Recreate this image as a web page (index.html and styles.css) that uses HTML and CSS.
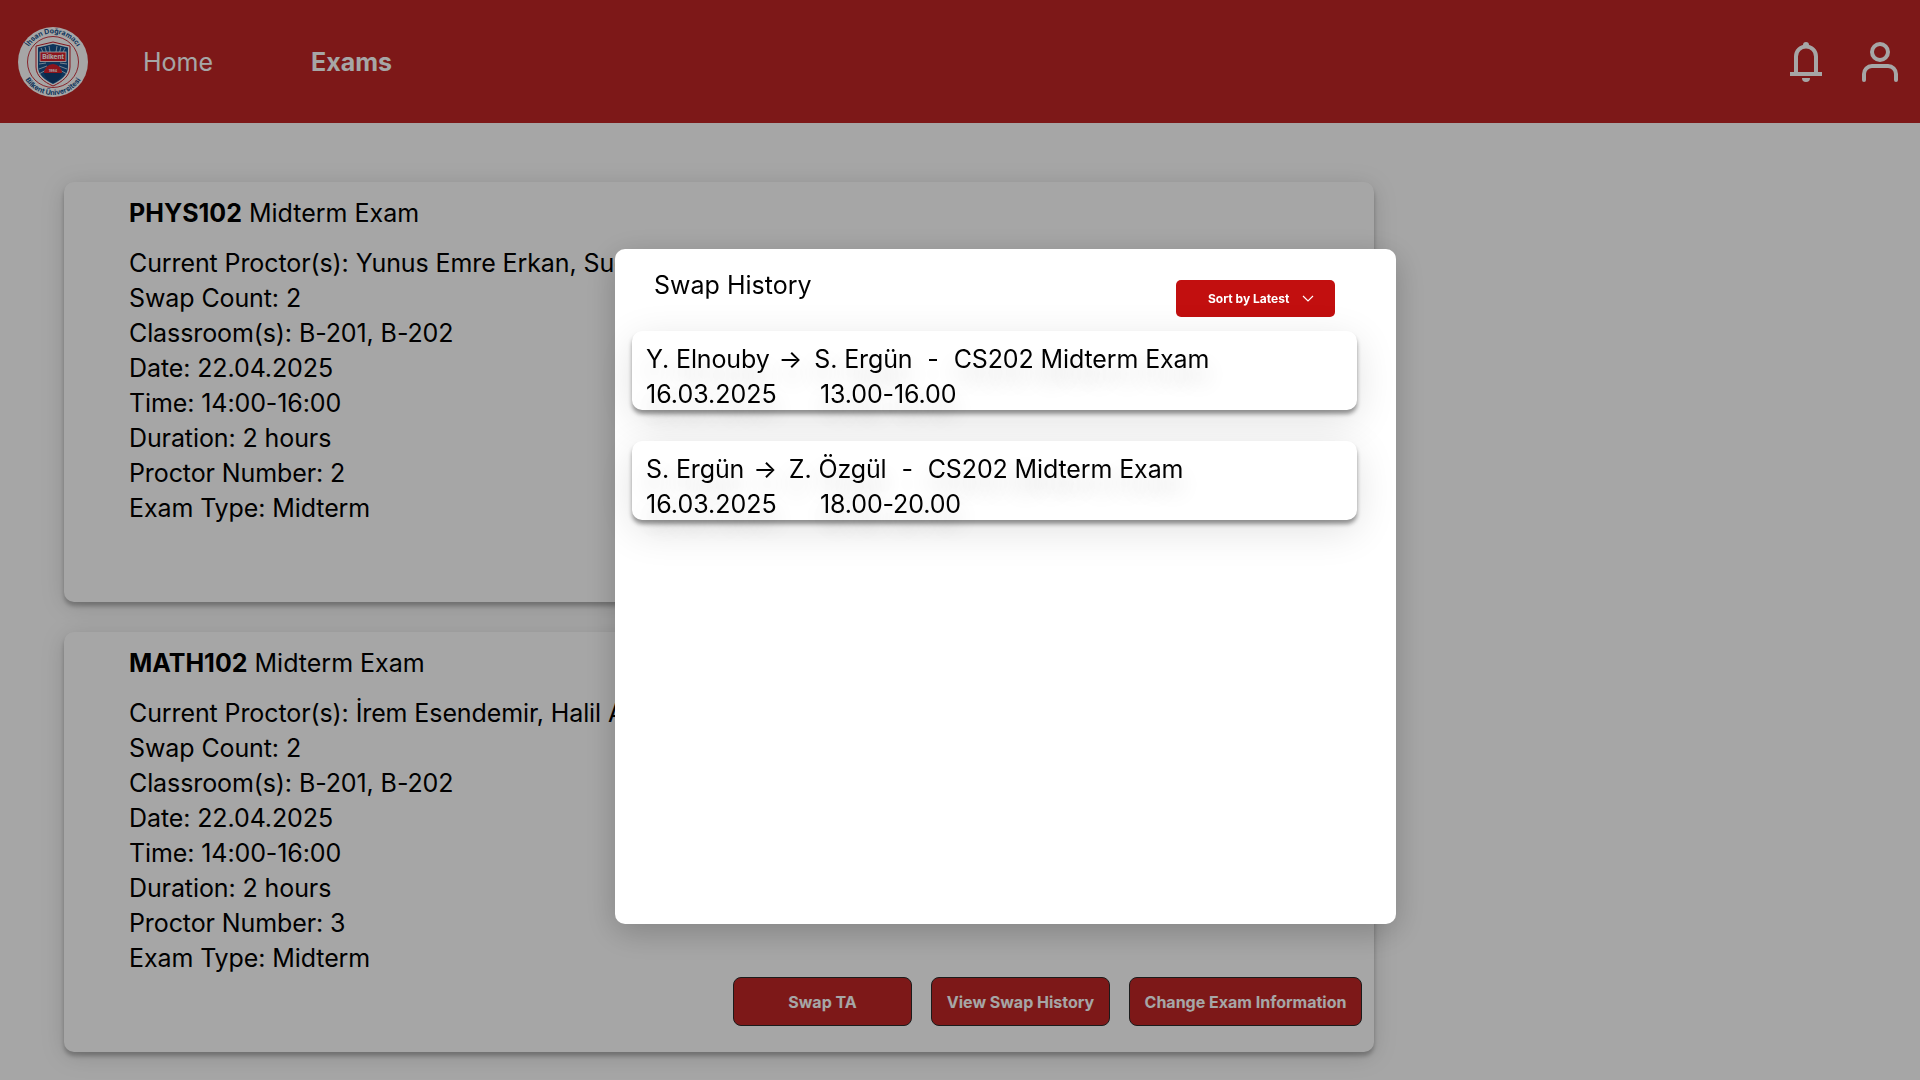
FILE: index.html
```html
<!DOCTYPE html>
<html lang="en">

<head>
    <meta charset="UTF-8">
    <meta name="viewport" content="width=device-width, initial-scale=1.0">
    <title>Exams</title>
    <link rel="stylesheet" href="styles.css">
</head>

<body>
    <header class="topbar">
        <svg class="logo" viewBox="0 0 70 70" role="img" aria-label="Bilkent University seal">
            <defs>
                <path id="arc-top" d="M6.500 35a28.500 28.500 0 0 1 57 0"/>
                <path id="arc-bottom" d="M2 35a33 33 0 0 0 66 0"/>
            </defs>
            <circle cx="35" cy="35" r="35" fill="#fff"/>
            <circle cx="35" cy="35" r="25.500" fill="none" stroke="#c8202c" stroke-width="0.9"/>
            <text class="seal-text"><textPath href="#arc-top" startOffset="50%" text-anchor="middle">İhsan Doğramacı</textPath></text>
            <text class="seal-text"><textPath href="#arc-bottom" startOffset="50%" text-anchor="middle">Bilkent Üniversitesi</textPath></text>
            <path d="M35 15l17 4v21c0 9-8 15-17 19-9-4-17-10-17-19V19z" fill="#fff" stroke="#c8202c" stroke-width="1"/>
            <path d="M35 17l15 3.500V40c0 8-7 13-15 17-8-4-15-9-15-17V20.500z" fill="#14508c"/>
            <path d="M23 21l5 10M27 20l3 11M31 19l2 12M39 19l-2 12M43 20l-3 11M47 21l-5 10M21 37l7-1M21 42l8-3M21 47l9-5M49 37l-7-1M49 42l-8-3M49 47l-9-5" stroke="#dfe6ee" stroke-width="0.8"/>
            <rect x="22" y="25" width="26" height="9.500" fill="#d8202c" stroke="#fff" stroke-width="0.8"/>
            <text class="seal-name" x="35" y="32" text-anchor="middle">Bilkent</text>
            <path d="M26 46a9 9 0 0 1 18 0z" fill="#d8202c"/>
            <path d="M26 46h18c-1 5-5 8-9 10-4-2-8-5-9-10z" fill="#123f73"/>
            <text class="seal-year" x="35" y="44.600" text-anchor="middle">1984</text>
        </svg>
        <nav class="nav">
            <a class="nav-link" href="#">Home</a>
            <a class="nav-link active" href="#">Exams</a>
        </nav>
        <div class="topbar-icons">
            <svg class="bell" viewBox="0 0 32 40" fill="none" stroke="#fff" stroke-width="4">
                <path d="M6 32V14.500a10 10 0 0 1 20 0V32"/>
                <path d="M0 32h32" stroke-width="4"/>
                <circle cx="16" cy="3" r="3" fill="#fff" stroke="none"/>
                <path d="M12 36h8a4 4 0 0 1-8 0z" fill="#fff" stroke="none"/>
            </svg>
            <svg class="person" viewBox="0 0 36 40" fill="none" stroke="#fff" stroke-width="4">
                <circle cx="18" cy="10" r="8"/>
                <path d="M2 38v-6a8 8 0 0 1 8-8h16a8 8 0 0 1 8 8v6" stroke-linecap="round"/>
            </svg>
        </div>
    </header>

    <main class="exam-list">
        <section class="exam-card">
            <h3 class="exam-title"><b>PHYS102</b> Midterm Exam</h3>
            <p class="exam-info">Current Proctor(s): Yunus Emre Erkan, Sude Ergün<br>Swap Count: 2<br>Classroom(s): B-201, B-202<br>Date: 22.04.2025<br>Time: 14:00-16:00<br>Duration: 2 hours<br>Proctor Number: 2<br>Exam Type: Midterm</p>
            <div class="exam-actions">
                <button class="action-btn">Swap TA</button>
                <button class="action-btn">View Swap History</button>
                <button class="action-btn wide">Change Exam Information</button>
            </div>
        </section>
        <section class="exam-card">
            <h3 class="exam-title"><b>MATH102</b> Midterm Exam</h3>
            <p class="exam-info">Current Proctor(s): İrem Esendemir, Halil Arda Özgül<br>Swap Count: 2<br>Classroom(s): B-201, B-202<br>Date: 22.04.2025<br>Time: 14:00-16:00<br>Duration: 2 hours<br>Proctor Number: 3<br>Exam Type: Midterm</p>
            <div class="exam-actions">
                <button class="action-btn">Swap TA</button>
                <button class="action-btn">View Swap History</button>
                <button class="action-btn wide">Change Exam Information</button>
            </div>
        </section>
    </main>

    <div class="overlay"></div>

    <div class="modal">
        <div class="modal-head">
            <h2 class="modal-title">Swap History</h2>
            <button class="sort-btn">Sort by Latest
                <svg class="chevron" viewBox="0 0 12 7" fill="none" stroke="#fff" stroke-width="1.200"><path d="M1 1l5 5 5-5"/></svg>
            </button>
        </div>
        <div class="swap-list">
            <div class="swap-item">
                <div class="swap-line">Y. Elnouby <span class="arrow">→</span> S. Ergün <span class="dash">-</span> CS202 Midterm Exam</div>
                <div class="swap-line"><span class="swap-date">16.03.2025</span>13.00-16.00</div>
            </div>
            <div class="swap-item">
                <div class="swap-line">S. Ergün <span class="arrow">→</span> Z. Özgül <span class="dash">-</span> CS202 Midterm Exam</div>
                <div class="swap-line"><span class="swap-date">16.03.2025</span>18.00-20.00</div>
            </div>
        </div>
    </div>
</body>

</html>
```

FILE: styles.css
```css
* {
    box-sizing: border-box;
}

html, body {
    height: 100%;
}

body {
    margin: 0;
    background: #fff;
    color: #000;
    font-family: Inter, "Liberation Sans", sans-serif;
    overflow: hidden;
}

.topbar {
    height: 123px;
    padding: 0 22px 0 18px;
    background: #c02626;
    display: flex;
    align-items: center;
}

.logo {
    width: 70px;
    height: 70px;
    flex-shrink: 0;
}

.seal-text {
    font-size: 7px;
    font-weight: 700;
    fill: #14508c;
}

.seal-name {
    font-size: 6.500px;
    font-weight: 700;
    fill: #fff;
}

.seal-year {
    font-size: 3.500px;
    font-weight: 700;
    fill: #fff;
}

.nav {
    margin-left: 55px;
    display: flex;
    gap: 98px;
}

.nav-link {
    color: #fff;
    font-size: 25px;
    text-decoration: none;
}

.nav-link.active {
    font-weight: 700;
}

.topbar-icons {
    margin-left: auto;
    display: flex;
    align-items: center;
    gap: 40px;
}

.bell {
    width: 32px;
    height: 40px;
}

.person {
    width: 36px;
    height: 40px;
}

.exam-list {
    width: 1374px;
    padding: 59px 0 0 64px;
    display: flex;
    flex-direction: column;
    gap: 30px;
}

.exam-card {
    height: 420px;
    padding: 12px 12px 26px 65px;
    border-radius: 10px;
    background: #fff;
    box-shadow: 0 4px 4px rgba(0, 0, 0, 0.25), 0 4px 24px rgba(0, 0, 0, 0.15);
    display: flex;
    flex-direction: column;
}

.exam-title {
    margin: 0 0 14px;
    font-size: 25px;
    font-weight: 400;
    line-height: 38px;
}

.exam-info {
    margin: 0;
    font-size: 25px;
    line-height: 35px;
    letter-spacing: -0.1px;
}

.exam-actions {
    margin-top: auto;
    display: flex;
    justify-content: flex-end;
    gap: 19px;
}

.action-btn {
    width: 179px;
    height: 49px;
    padding: 0;
    border: 1px solid #2a2a2a;
    border-radius: 8px;
    background: #c02626;
    color: #fff;
    font-family: inherit;
    font-size: 16px;
    font-weight: 700;
}

.action-btn.wide {
    width: 233px;
}

.overlay {
    position: fixed;
    inset: 0;
    background: rgba(0, 0, 0, 0.35);
}

.modal {
    position: fixed;
    left: 615px;
    top: 249px;
    width: 781px;
    height: 675px;
    padding: 16px 39px 0 17px;
    border-radius: 10px;
    background: #fff;
    box-shadow: 0 8px 32px rgba(0, 0, 0, 0.22);
}

.modal-head {
    height: 66px;
    display: flex;
    justify-content: space-between;
    align-items: flex-start;
}

.modal-title {
    margin: 0 0 0 22px;
    font-size: 25px;
    font-weight: 400;
    line-height: 40px;
}

.sort-btn {
    width: 159px;
    height: 37px;
    margin: 15px 22px 0 0;
    padding: 0 0 0 32px;
    border: 0;
    border-radius: 5px;
    background: #c20f0f;
    color: #fff;
    font-family: inherit;
    font-size: 12px;
    font-weight: 700;
    display: flex;
    align-items: center;
    gap: 13px;
}

.chevron {
    width: 12px;
    height: 7px;
}

.swap-list {
    display: flex;
    flex-direction: column;
    gap: 31px;
}

.swap-item {
    height: 79px;
    padding: 11px 14px 0;
    border-radius: 10px;
    background: #fff;
    box-shadow: 0 4px 4px rgba(0, 0, 0, 0.4), 0 10px 40px rgba(0, 0, 0, 0.12);
}

.swap-line {
    font-size: 25px;
    line-height: 35px;
    letter-spacing: -0.12px;
    white-space: pre-wrap;
    text-shadow: 0 14px 22px rgba(0, 0, 0, 0.2);
}

.arrow {
    margin: 0 5px 0 2px;
}

.dash {
    margin: 0 8px;
}

.swap-date {
    display: inline-block;
    width: 174px;
    letter-spacing: 0;
}
```
